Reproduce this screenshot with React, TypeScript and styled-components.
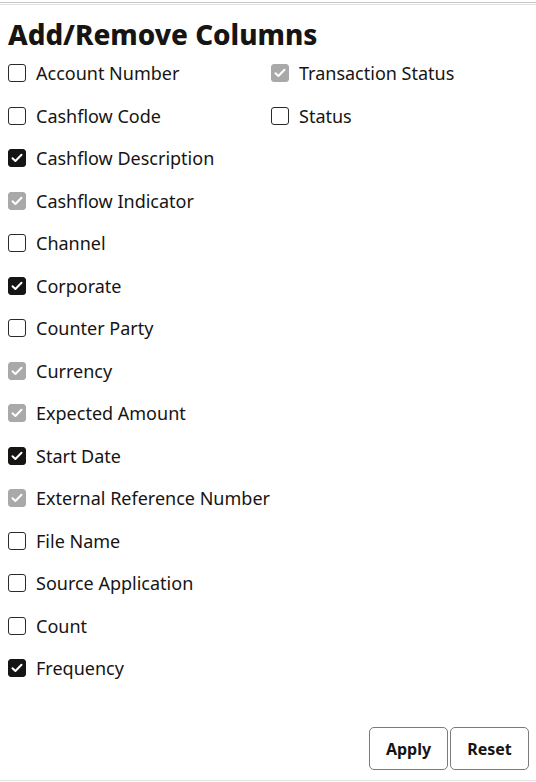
import styled, { createGlobalStyle } from 'styled-components';

const GlobalStyle = createGlobalStyle`
  html, body {
    margin: 0;
    padding: 0;
    background: #ffffff;
  }
  body {
    font-family: "Noto Sans", "Open Sans", sans-serif;
    color: #161513;
  }
`;

type CheckState = 'off' | 'on' | 'disabled';

const columns: { label: string; state: CheckState }[] = [
  { label: 'Account Number', state: 'off' },
  { label: 'Cashflow Code', state: 'off' },
  { label: 'Cashflow Description', state: 'on' },
  { label: 'Cashflow Indicator', state: 'disabled' },
  { label: 'Channel', state: 'off' },
  { label: 'Corporate', state: 'on' },
  { label: 'Counter Party', state: 'off' },
  { label: 'Currency', state: 'disabled' },
  { label: 'Expected Amount', state: 'disabled' },
  { label: 'Start Date', state: 'on' },
  { label: 'External Reference Number', state: 'disabled' },
  { label: 'File Name', state: 'off' },
  { label: 'Source Application', state: 'off' },
  { label: 'Count', state: 'off' },
  { label: 'Frequency', state: 'on' },
  { label: 'Transaction Status', state: 'disabled' },
  { label: 'Status', state: 'off' },
];

export default function App() {
  return (
    <>
      <GlobalStyle />
      <Panel>
        <Heading>Add/Remove Columns</Heading>
        <OptionGrid>
          {columns.map((c) => (
            <Option key={c.label}>
              <Box $state={c.state}>
                {c.state !== 'off' && (
                  <svg width="12" height="10" viewBox="0 0 12 10">
                    <path
                      d="M1.5 5.2 L4.4 8 L10.5 1.8"
                      fill="none"
                      stroke="#ffffff"
                      strokeWidth="2"
                      strokeLinecap="round"
                      strokeLinejoin="round"
                    />
                  </svg>
                )}
              </Box>
              <Label>{c.label}</Label>
            </Option>
          ))}
        </OptionGrid>
        <Footer>
          <ActionButton>Apply</ActionButton>
          <ActionButton>Reset</ActionButton>
        </Footer>
      </Panel>
    </>
  );
}

const Panel = styled.div`
  width: 536px;
  height: 779px;
  box-sizing: border-box;
  margin-top: 2px;
  border-top: 1px solid #c8c8c8;
  box-shadow: inset 0 1px 0 #ffffff, inset 0 2px 0 #e2e2e2;
  border-bottom: 1px solid #e4e4e4;
  display: flex;
  flex-direction: column;
  padding: 0 7px 0 8px;
`;

const Heading = styled.h1`
  margin: 13px 0 0;
  font-size: 27.8px;
  line-height: 36px;
  font-weight: 800;
  letter-spacing: 0;
`;

const OptionGrid = styled.div`
  display: grid;
  grid-auto-flow: column;
  grid-template-rows: repeat(15, 42.5px);
  grid-template-columns: 263px 1fr;
`;

const Option = styled.label`
  display: flex;
  align-items: center;
  gap: 10px;
  height: 42.5px;
`;

const Box = styled.span<{ $state: CheckState }>`
  width: 18px;
  height: 18px;
  box-sizing: border-box;
  border-radius: 3px;
  display: flex;
  align-items: center;
  justify-content: center;
  flex-shrink: 0;
  border: ${(p) =>
    p.$state === 'off' ? '1.5px solid #2b2a28' : p.$state === 'on' ? '1.5px solid #161513' : '1.5px solid #a9a9a9'};
  background: ${(p) => (p.$state === 'on' ? '#161513' : p.$state === 'disabled' ? '#a9a9a9' : '#ffffff')};
`;

const Label = styled.span`
  font-size: 18px;
  color: #161513;
  white-space: nowrap;
`;

const Footer = styled.div`
  margin-top: auto;
  margin-bottom: 10px;
  display: flex;
  justify-content: flex-end;
  gap: 2px;
`;

const ActionButton = styled.button`
  width: 79px;
  height: 43px;
  border: 1px solid #7a7a7a;
  border-radius: 5px;
  background: #ffffff;
  font-family: "Noto Sans", "Open Sans", sans-serif;
  font-size: 16px;
  font-weight: 700;
  color: #161513;
  cursor: pointer;
`;
